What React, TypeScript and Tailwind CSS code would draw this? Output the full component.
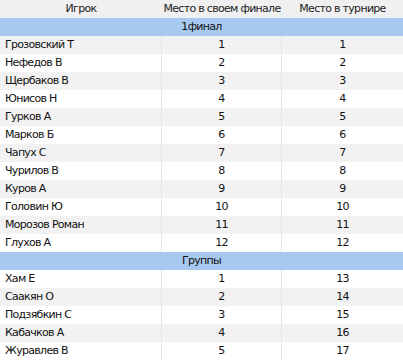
const groups = [
  {
    title: "1финал",
    rows: [
      ["Грозовский Т", 1, 1],
      ["Нефедов В", 2, 2],
      ["Щербаков В", 3, 3],
      ["Юнисов Н", 4, 4],
      ["Гурков А", 5, 5],
      ["Марков Б", 6, 6],
      ["Чапух С", 7, 7],
      ["Чурилов В", 8, 8],
      ["Куров А", 9, 9],
      ["Головин Ю", 10, 10],
      ["Морозов Роман", 11, 11],
      ["Глухов А", 12, 12],
    ],
  },
  {
    title: "Группы",
    rows: [
      ["Хам Е", 1, 13],
      ["Саакян О", 2, 14],
      ["Подзябкин С", 3, 15],
      ["Кабачков А", 4, 16],
      ["Журавлев В", 5, 17],
    ],
  },
];

export default function App() {
  let idx = 0;
  return (
    <div
      className="w-[403px] h-[360px] overflow-hidden bg-white text-[11px] text-[#111] tracking-[-0.7px] whitespace-nowrap"
      style={{ fontFamily: '"DejaVu Sans", Verdana, sans-serif' }}
    >
      <div className="grid grid-cols-[162px_120px_121px] h-[18px] bg-[#f0f0f0] text-[#222] items-center">
        <div className="text-center">Игрок</div>
        <div className="text-center">Место в своем финале</div>
        <div className="text-center">Место в турнире</div>
      </div>
      {groups.map((g) => {
        idx++;
        return (
          <div key={g.title}>
            <div className="h-[18px] bg-[#a7c9f0] flex items-center justify-center">
              {g.title}
            </div>
            {g.rows.map((r) => {
              idx++;
              const gray = idx % 2 === 0;
              return (
                <div
                  key={r[0]}
                  className={
                    "grid grid-cols-[162px_120px_121px] h-[18px] items-center " +
                    (gray ? "bg-[#f2f2f2]" : "bg-white")
                  }
                >
                  <div className="pl-[5px] h-full flex items-center border-r border-[#e6e6e6]">
                    {r[0]}
                  </div>
                  <div className="h-full flex items-center justify-center border-r border-[#e6e6e6]">
                    {r[1]}
                  </div>
                  <div className="text-center">{r[2]}</div>
                </div>
              );
            })}
          </div>
        );
      })}
    </div>
  );
}
